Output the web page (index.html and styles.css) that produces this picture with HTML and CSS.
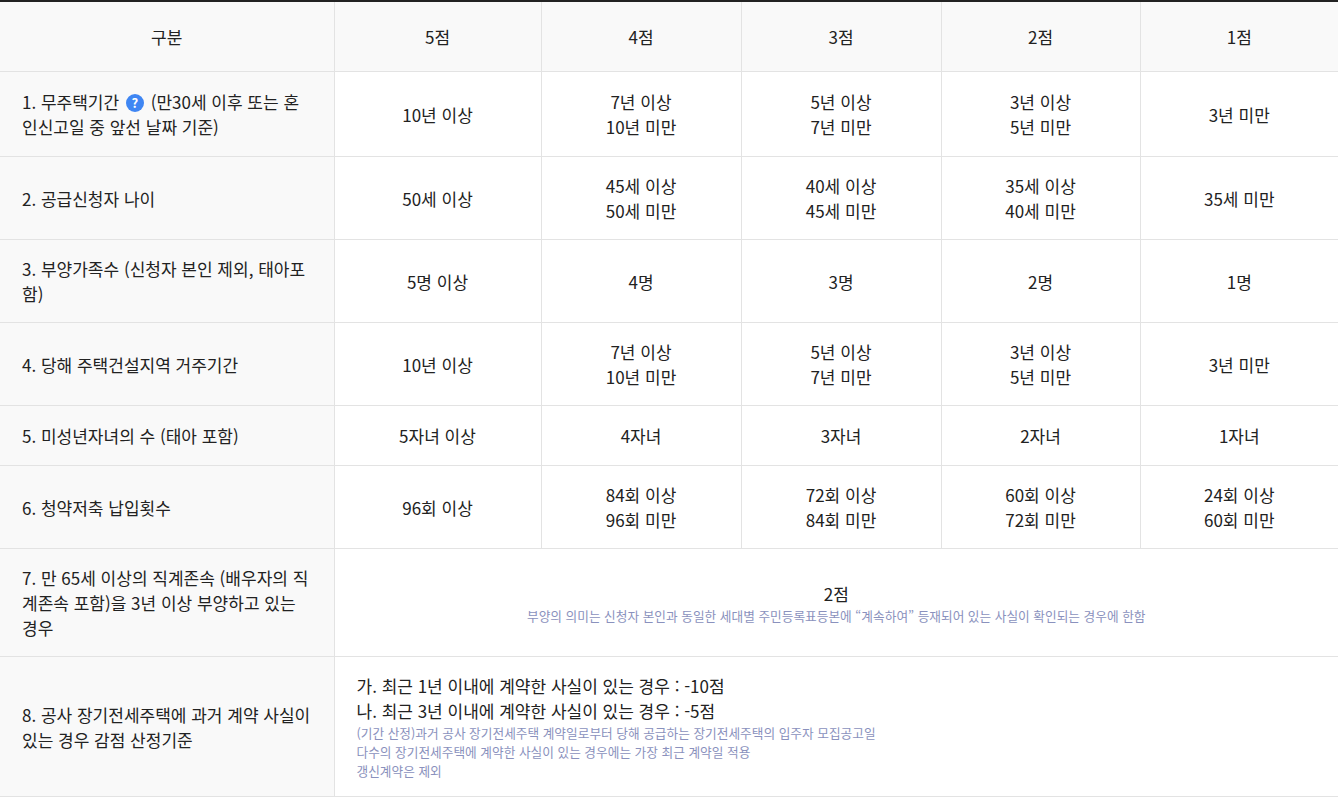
FILE: index.html
```html
<!DOCTYPE html>
<html lang="ko">
<head>
<meta charset="utf-8">
<link rel="stylesheet" href="styles.css">
</head>
<body>
<table class="score">
  <colgroup>
    <col class="c-label">
    <col class="c-5">
    <col class="c-4">
    <col class="c-3">
    <col class="c-2">
    <col class="c-1">
  </colgroup>
  <thead>
    <tr>
      <th>구분</th>
      <th>5점</th>
      <th>4점</th>
      <th>3점</th>
      <th>2점</th>
      <th>1점</th>
    </tr>
  </thead>
  <tbody>
    <tr class="row-first">
      <td class="label">1. 무주택기간 <span class="help">?</span> (만30세 이후 또는 혼인신고일 중 앞선 날짜 기준)</td>
      <td>10년 이상</td>
      <td>7년 이상<br>10년 미만</td>
      <td>5년 이상<br>7년 미만</td>
      <td>3년 이상<br>5년 미만</td>
      <td>3년 미만</td>
    </tr>
    <tr>
      <td class="label">2. 공급신청자 나이</td>
      <td>50세 이상</td>
      <td>45세 이상<br>50세 미만</td>
      <td>40세 이상<br>45세 미만</td>
      <td>35세 이상<br>40세 미만</td>
      <td>35세 미만</td>
    </tr>
    <tr>
      <td class="label">3. 부양가족수 (신청자 본인 제외, 태아포함)</td>
      <td>5명 이상</td>
      <td>4명</td>
      <td>3명</td>
      <td>2명</td>
      <td>1명</td>
    </tr>
    <tr>
      <td class="label">4. 당해 주택건설지역 거주기간</td>
      <td>10년 이상</td>
      <td>7년 이상<br>10년 미만</td>
      <td>5년 이상<br>7년 미만</td>
      <td>3년 이상<br>5년 미만</td>
      <td>3년 미만</td>
    </tr>
    <tr class="row-single">
      <td class="label">5. 미성년자녀의 수 (태아 포함)</td>
      <td>5자녀 이상</td>
      <td>4자녀</td>
      <td>3자녀</td>
      <td>2자녀</td>
      <td>1자녀</td>
    </tr>
    <tr>
      <td class="label">6. 청약저축 납입횟수</td>
      <td>96회 이상</td>
      <td>84회 이상<br>96회 미만</td>
      <td>72회 이상<br>84회 미만</td>
      <td>60회 이상<br>72회 미만</td>
      <td>24회 이상<br>60회 미만</td>
    </tr>
    <tr>
      <td class="label">7. 만 65세 이상의 직계존속 (배우자의 직계존속 포함)을 3년 이상 부양하고 있는 경우</td>
      <td colspan="5">2점<p class="note">부양의 의미는 신청자 본인과 동일한 세대별 주민등록표등본에 “계속하여” 등재되어 있는 사실이 확인되는 경우에 한함</p></td>
    </tr>
    <tr>
      <td class="label">8. 공사 장기전세주택에 과거 계약 사실이 있는 경우 감점 산정기준</td>
      <td colspan="5" class="left">
        <p class="item">가. 최근 1년 이내에 계약한 사실이 있는 경우 : -10점</p>
        <p class="item">나. 최근 3년 이내에 계약한 사실이 있는 경우 : -5점</p>
        <p class="note">(기간 산정)과거 공사 장기전세주택 계약일로부터 당해 공급하는 장기전세주택의 입주자 모집공고일</p>
        <p class="note">다수의 장기전세주택에 계약한 사실이 있는 경우에는 가장 최근 계약일 적용</p>
        <p class="note">갱신계약은 제외</p>
      </td>
    </tr>
  </tbody>
</table>
</body>
</html>
```
FILE: styles.css
```css
html, body {
  margin: 0;
  padding: 0;
  background: #ffffff;
}
body {
  font-family: "Noto Sans CJK KR", "Noto Sans", sans-serif;
  font-size: 17px;
  line-height: 25px;
  color: #222222;
}
.score {
  width: 1338px;
  border-collapse: collapse;
  table-layout: fixed;
  border-top: 2px solid #222222;
}
.c-label { width: 334px; }
.c-5 { width: 207px; }
.c-4 { width: 200px; }
.c-3 { width: 200px; }
.c-2 { width: 199px; }
.c-1 { width: 198px; }

.score th,
.score td {
  border: 1px solid #e3e3e3;
  text-align: center;
  vertical-align: middle;
  padding: 16px 10px;
  font-weight: 400;
}
.score th:first-child,
.score td:first-child { border-left: none; }
.score th:last-child,
.score td:last-child { border-right: none; }
.score th {
  background: #f9f9f9;
  padding: 22px 10px;
}
.score td.label {
  background: #f9f9f9;
  text-align: left;
  padding: 16px 22px;
}
.score td.left {
  text-align: left;
  padding: 16px 22px;
}
.row-first { height: 85px; }
.row-single { height: 60px; }
.help {
  display: inline-block;
  width: 18px;
  height: 18px;
  margin: 0 2px;
  border-radius: 50%;
  background: #3f86f3;
  color: #ffffff;
  font-size: 13px;
  font-weight: 700;
  line-height: 18px;
  text-align: center;
  vertical-align: 1px;
}
.item {
  margin: 0;
  line-height: 25px;
}
.note {
  margin: 0;
  font-size: 12.7px;
  line-height: 19px;
  color: #8a91bd;
}
```
